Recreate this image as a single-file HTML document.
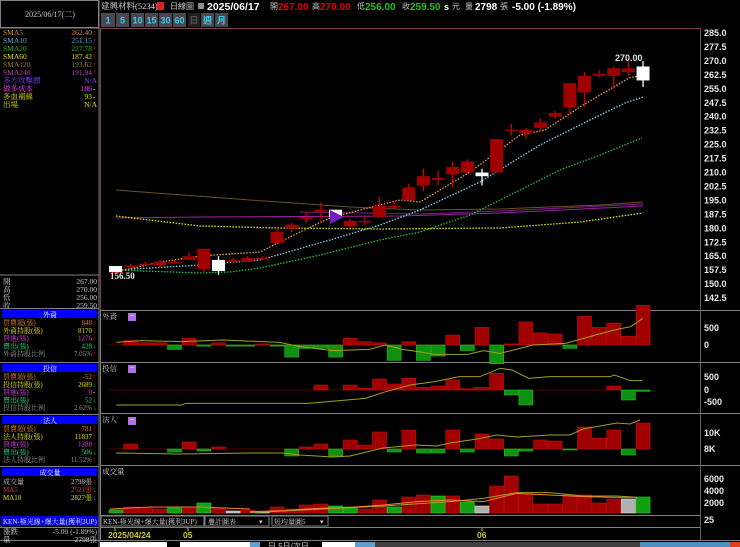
<!DOCTYPE html>
<html><head><meta charset="utf-8">
<style>
*{margin:0;padding:0;box-sizing:border-box}
body{width:740px;height:547px;background:#000;overflow:hidden;font-family:"Liberation Sans","Noto Sans CJK TC",sans-serif;position:relative}
svg{position:absolute;left:0;top:0}
</style></head><body>
<svg id="s" width="740" height="547" xmlns="http://www.w3.org/2000/svg" font-family="Liberation Sans, Noto Sans CJK TC, sans-serif">
<rect width="740" height="547" fill="#000"/>
<rect x="0.5" y="0.5" width="98" height="27" fill="none" stroke="#808080"/>
<text x="50" y="17" fill="#c8c8c8" font-size="8" text-anchor="middle" font-family="Liberation Serif, Noto Serif CJK SC, serif">2025/06/17(二)</text>
<line x1="99" y1="0" x2="99" y2="547" stroke="#808080"/>
<line x1="0" y1="28" x2="99" y2="28" stroke="#808080"/>
<g font-size="7.5" font-family="Liberation Serif, Noto Serif CJK TC, serif">
<text x="3" y="35" fill="#e08a30">SMA5</text><text x="92" y="35" fill="#e08a30" text-anchor="end">262.40</text><text x="93" y="35" fill="#f00">↑</text>
<text x="3" y="43" fill="#5ab0e0">SMA10</text><text x="92" y="43" fill="#5ab0e0" text-anchor="end">251.15</text><text x="93" y="43" fill="#f00">↑</text>
<text x="3" y="51" fill="#20c020">SMA20</text><text x="92" y="51" fill="#20c020" text-anchor="end">227.78</text><text x="93" y="51" fill="#f00">↑</text>
<text x="3" y="59" fill="#e0e000">SMA60</text><text x="92" y="59" fill="#e0e000" text-anchor="end">187.42</text><text x="93" y="59" fill="#f00">↑</text>
<text x="3" y="67" fill="#a07840">SMA120</text><text x="92" y="67" fill="#a07840" text-anchor="end">193.62</text><text x="93" y="67" fill="#f00">↑</text>
<text x="3" y="75" fill="#c040c0">SMA240</text><text x="92" y="75" fill="#c040c0" text-anchor="end">191.94</text><text x="93" y="75" fill="#f00">↑</text>
<text x="3" y="83" fill="#8040ff">多方攻擊圈</text><text x="97" y="83" fill="#8040ff" text-anchor="end">N/A</text>
<text x="3" y="91" fill="#ff40ff">做多成本</text><text x="92" y="91" fill="#ff40ff" text-anchor="end">186</text><text x="93" y="91" fill="#fff">-</text>
<text x="3" y="99" fill="#e0e000">多血補線</text><text x="92" y="99" fill="#e0e000" text-anchor="end">93</text><text x="93" y="99" fill="#fff">-</text>
<text x="3" y="107" fill="#e0e000">出場</text><text x="97" y="107" fill="#e0e000" text-anchor="end">N/A</text>
</g>
<line x1="0" y1="275" x2="99" y2="275" stroke="#808080"/>
<g font-size="7.5" fill="#c8c8c8" font-family="Liberation Serif, Noto Serif CJK TC, serif">
<text x="3" y="284">開</text><text x="97" y="284" text-anchor="end">267.00</text>
<text x="3" y="292">高</text><text x="97" y="292" text-anchor="end">270.00</text>
<text x="3" y="300">低</text><text x="97" y="300" text-anchor="end">256.00</text>
<text x="3" y="308">收</text><text x="97" y="308" text-anchor="end">259.50</text>
</g>
<g id="leftp" font-size="7" font-family="Liberation Serif, Noto Serif CJK TC, serif"></g>
<g font-size="9" font-weight="bold">
<text x="101" y="9" fill="#e0e0e0" font-weight="normal" font-size="8.5" font-family="Liberation Serif, Noto Serif CJK TC, serif">建興材料(5234)</text>
<rect x="157" y="2" width="7" height="8" fill="#e02020"/>
<text x="170" y="9" fill="#c8c8c8" font-weight="normal" font-size="8">日線圖</text>
<rect x="198" y="3" width="6" height="6" fill="#909090"/>
<text x="207" y="10" fill="#fff" font-size="10.5">2025/06/17</text>
<text x="270" y="9" fill="#c8c8c8" font-weight="normal" font-size="8">開</text>
<text x="278" y="10" fill="#e00000" font-size="10">267.00</text>
<text x="312" y="9" fill="#c8c8c8" font-weight="normal" font-size="8">高</text>
<text x="320" y="10" fill="#e00000" font-size="10">270.00</text>
<text x="357" y="9" fill="#c8c8c8" font-weight="normal" font-size="8">低</text>
<text x="365" y="10" fill="#20c020" font-size="10">256.00</text>
<text x="402" y="9" fill="#c8c8c8" font-weight="normal" font-size="8">收</text>
<text x="410" y="10" fill="#20c020" font-size="10">259.50</text>
<text x="444" y="10" fill="#fff" font-size="9">s</text>
<text x="452" y="9" fill="#c8c8c8" font-weight="normal" font-size="8">元</text>
<text x="465" y="9" fill="#c8c8c8" font-weight="normal" font-size="8">量</text>
<text x="475" y="10" fill="#fff" font-size="10">2798</text>
<text x="500" y="9" fill="#c8c8c8" font-weight="normal" font-size="8">張</text>
<text x="512" y="10" fill="#fff" font-size="10">-5.00 (-1.89%)</text>
</g>
<g id="btns" font-size="9" font-weight="bold"></g>
<line x1="100" y1="28.5" x2="700" y2="28.5" stroke="#804050"/>
<line x1="100.5" y1="28" x2="100.5" y2="310" stroke="#804050"/>
<line x1="700.5" y1="28" x2="700.5" y2="540" stroke="#606060"/>
<g stroke="#808080">
<line x1="100" y1="310.5" x2="740" y2="310.5"/><line x1="100" y1="362.5" x2="740" y2="362.5"/>
<line x1="100" y1="413.5" x2="740" y2="413.5"/><line x1="100" y1="465.5" x2="740" y2="465.5"/>
<line x1="100" y1="515.5" x2="700" y2="515.5"/><line x1="100" y1="527.5" x2="700" y2="527.5"/>
<line x1="100.5" y1="310" x2="100.5" y2="540" />
<line x1="0" y1="540.5" x2="740" y2="540.5"/>
</g>
<g id="main"></g>
<g id="axis" font-size="9" font-weight="bold" fill="#e8e8e8"></g>
<g font-size="7.5" fill="#c8c8c8" font-family="Liberation Serif, Noto Serif CJK TC, serif">
<text x="102" y="319">外資</text><text x="102" y="371">投信</text><text x="102" y="422">法人</text><text x="102" y="474">成交量</text>
</g>
<g fill="#b070e0"><rect x="128" y="313" width="8" height="8"/><rect x="128" y="365" width="8" height="8"/><rect x="128" y="417" width="8" height="8"/></g>
<g fill="#e0a0ff"><rect x="130" y="315" width="4" height="1"/><rect x="130" y="367" width="4" height="1"/><rect x="130" y="419" width="4" height="1"/></g>
<g font-size="9" font-weight="bold" fill="#e8e8e8">
<text x="704" y="331">500</text><text x="704" y="348">0</text>
<text x="704" y="380">500</text><text x="704" y="393">0</text><text x="704" y="405">-500</text>
<text x="704" y="436">10K</text><text x="704" y="452">8K</text>
<text x="704" y="482">6000</text><text x="704" y="494">4000</text><text x="704" y="506">2000</text>
<text x="704" y="523">25</text>
</g>
<rect x="101" y="516" width="103" height="10" fill="none" stroke="#808080"/>
<text x="103" y="524" font-size="7" fill="#c8c8c8" font-family="Liberation Serif, Noto Serif CJK TC, serif">KEN-極光線+爆大量(獲利3UP)</text>
<rect x="205" y="516" width="64" height="10" fill="none" stroke="#808080"/>
<text x="208" y="524" font-size="7" fill="#c8c8c8" font-family="Liberation Serif, Noto Serif CJK TC, serif">疊計圖表</text>
<text x="259" y="524" font-size="7" fill="#c8c8c8">▾</text>
<rect x="272" y="516" width="56" height="10" fill="none" stroke="#808080"/>
<text x="274" y="524" font-size="7" fill="#c8c8c8" font-family="Liberation Serif, Noto Serif CJK TC, serif">短均量圖5</text>
<text x="320" y="524" font-size="7" fill="#c8c8c8">▾</text>
<g stroke="#c8c832"><line x1="115" y1="528" x2="115" y2="531"/><line x1="188" y1="528" x2="188" y2="531"/><line x1="482" y1="528" x2="482" y2="531"/></g>
<g font-size="8.5" font-weight="bold" fill="#c8c832"><text x="108" y="538">2025/04/24</text><text x="183" y="538">05</text><text x="477" y="538">06</text></g>
<rect x="100" y="542" width="67" height="5" fill="#fff"/><rect x="180" y="542" width="70" height="5" fill="#fff"/>
<rect x="250" y="542" width="10" height="5" fill="#60a0d0"/>
<text x="268" y="549" font-size="8" fill="#c8c8c8">日 5日/次日</text>
<rect x="322" y="542" width="33" height="5" fill="#fff"/><rect x="355" y="542" width="20" height="5" fill="#60a0d0"/>
<rect x="375" y="542" width="300" height="5" fill="#404040"/>
<rect x="640" y="542" width="100" height="5" fill="#5090c0"/>
<rect x="730" y="542" width="10" height="5" fill="#e04020"/>
<rect x="1" y="516" width="97" height="10" fill="#0000e0"/>
<text x="3" y="524" font-size="7" fill="#e0e0ff" font-family="Liberation Serif, Noto Serif CJK TC, serif">KEN-極光線+爆大量(獲利3UP)</text>
<line x1="0" y1="527.5" x2="99" y2="527.5" stroke="#808080"/>
<g font-size="7.5" fill="#c8c8c8" font-family="Liberation Serif, Noto Serif CJK TC, serif">
<text x="3" y="534">漲跌</text><text x="97" y="534" text-anchor="end">-5.00 (-1.89%)</text>
<text x="3" y="542">量</text><text x="97" y="542" text-anchor="end">2798張</text>
</g>
</svg>
<script>
function add(g,html){document.getElementById(g).insertAdjacentHTML('beforeend',html);}
var b=[["1",101,15],["5",116,14],["10",131,14],["15",145,14],["30",159,14],["60",173,14],["日",188,13],["週",201,14],["月",215,14]];
b.forEach(function(x,i){var dark=i==6;add('btns','<rect x="'+x[1]+'" y="13" width="'+(x[2]-1)+'" height="14" fill="'+(dark?'#202020':'#484850')+'"/><text x="'+(x[1]+x[2]/2-0.5)+'" y="23.5" text-anchor="middle" fill="'+(dark?'#505050':'#40c8e8')+'">'+x[0]+'</text>');});
for(var k=0;k<20;k++){var p=285-7.5*k;var y=33+(285-p)*1.86;add('axis','<text x="704" y="'+(y+3)+'">'+p.toFixed(1)+'</text>');}
function sec(y,title,rows){var s='<rect x="2" y="'+y+'" width="95" height="8" fill="#0000ff"/><text x="50" y="'+(y+7)+'" text-anchor="middle" fill="#fff">'+title+'</text>';
rows.forEach(function(r,i){var yy=y+15+i*7.8;s+='<text x="3" y="'+yy+'" fill="'+r[2]+'">'+r[0]+'</text><text x="92" y="'+yy+'" text-anchor="end" fill="'+r[2]+'">'+r[1]+'</text><text x="93" y="'+yy+'" fill="'+(r[3]=='↑'?'#f00':(r[3]=='↓'?'#0c0':'#fff'))+'">'+r[3]+'</text>';});
s+='<line x1="0" y1="'+(y-1.5)+'" x2="99" y2="'+(y-1.5)+'" stroke="#808080"/>';add('leftp',s);}
sec(310,"外資",[["買賣超(張)","848","#e08030","↑"],["外資持股(張)","8170","#e0e000","↑"],["買進(張)","1276","#e040e0","↑"],["賣出(張)","428","#20e080","↓"],["外資持股比例","7.05%","#909090","↑"]]);
sec(364,"投信",[["買賣超(張)","-52","#e08030","↑"],["投信持股(張)","2689","#e0e000","↓"],["買進(張)","0","#e040e0","-"],["賣出(張)","52","#20e080","↓"],["投信持股比例","2.62%","#909090","↓"]]);
sec(416,"法人",[["買賣超(張)","781","#e08030","↑"],["法人持股(張)","11837","#e0e000","↑"],["買進(張)","1288","#e040e0","↑"],["賣出(張)","506","#20e080","↓"],["法人持股比例","11.52%","#909090","↑"]]);
add('leftp','<line x1="0" y1="466.5" x2="99" y2="466.5" stroke="#808080"/><rect x="2" y="468" width="95" height="8" fill="#0000ff"/><text x="50" y="475" text-anchor="middle" fill="#fff">成交量</text><text x="3" y="484" fill="#c8c8c8">成交量</text><text x="92" y="484" text-anchor="end" fill="#c8c8c8">2798張</text><text x="93" y="484" fill="#f00">↑</text><text x="3" y="492" fill="#e04040">MA5</text><text x="92" y="492" text-anchor="end" fill="#e04040">2521張</text><text x="93" y="492" fill="#0c0">↓</text><text x="3" y="500" fill="#e0e000">MA10</text><text x="92" y="500" text-anchor="end" fill="#e0e000">2827張</text><text x="93" y="500" fill="#0c0">↓</text>');
function X(i){return 116+14.64*i;}
function Y(p){return 33+(285-p)*1.86;}
function pl(pts,col,dash,w){return '<polyline points="'+pts.map(function(p){return p.join(',')}).join(' ')+'" fill="none" stroke="'+col+'" stroke-width="'+(w||1.3)+'"'+(dash?' stroke-dasharray="1.5 1.5"':'')+'/>';}
var m='';
m+=pl([[116,190],[250,200],[350,207],[420,210],[500,209],[600,205],[643,202]],'#6a5028',0,1);
m+=pl([[116,218],[200,217],[400,216],[500,213],[643,206]],'#a020a0',0,1);
m+=pl([[300,212],[420,214],[500,211],[643,204]],'#7a2080',0,1);
m+=pl([[116,216],[200,226],[280,228],[380,229],[500,228],[580,222],[643,213]],'#e8e800',1);
m+=pl([[116,270],[200,273],[230,272],[260,268],[320,255],[380,240],[420,232],[470,215],[520,190],[560,170],[600,155],[642,138]],'#20c040',1);
m+=pl([[116,270],[200,265],[260,260],[330,240],[380,225],[420,210],[480,182],[540,145],[590,120],[625,103],[643,97]],'#80d0f0',1);
m+=pl([[116,272],[160,262],[200,256],[260,252],[300,232],[330,218],[360,210],[400,200],[420,202],[470,172],[520,135],[545,130],[583,105],[629,78],[643,75]],'#f0a040',1);
var C=[[156,158,159,155],[160,160,161,159],[161,161,162,160],[160,162,163,159],[162,162,163,161],[163,165,167,163],[158,169,169,156],[163,157,165,155],[162,163,164,161],[162,164,165,162],[164,164,165,163],[172,178,180,172],[180,182,183,178],[185,186,189,183],[189,190,194,184],[186,190,190,186],[181,184,185,180],[184,184,186,182],[186,192,197,186],[192,192,194,190],[195,202,204,195],[203,208,212,200],[206,207,211,203],[209,213,216,202],[210,216,217,209],[210,208,212,203],[210,228,228,210],[233,233,236,230],[231,233,234,228],[234,237,239,232],[240,242,243,239],[245,258,258,241],[253,262,264,245],[262,263,265,261],[262,266,267,255],[264,266,270,262],[267,259.5,270,256]];
C.forEach(function(c,i){var x=X(i),o=c[0],cl=c[1];var up=cl>=o;
var col=up?'#a00000':'#fff';if(i==15)col='#fff';
var wc=up?'#d00000':'#fff';
m+='<line x1="'+x+'" y1="'+Y(c[2])+'" x2="'+x+'" y2="'+Y(c[3])+'" stroke="'+wc+'" stroke-width="1.3"/>';
var t=Y(Math.max(o,cl)),bo=Y(Math.min(o,cl));var h=Math.max(bo-t,1.5);
m+='<rect x="'+(x-6.5)+'" y="'+t+'" width="13" height="'+h+'" fill="'+col+'"/>';});
m+='<polygon points="330,210 344,217 330,224" fill="#7020c0"/>';
m+='<rect x="109" y="266" width="13" height="6" fill="#fff"/>';
m+='<text x="110" y="279" font-size="9" fill="#e0e0e0" font-family="Liberation Serif,serif" font-weight="bold">156.50</text>';
m+='<text x="615" y="61" font-size="9" fill="#e0e0e0" font-weight="bold">270.00</text>';
var F=[[1,4],[2,2],[3,2],[4,-4],[5,6],[6,-1],[7,2],[8,-1],[9,-1],[10,1],[11,-1],[12,-11],[13,-3],[14,-3],[15,-11],[16,6],[17,3],[18,2],[19,-14],[20,3],[21,-14],[22,-10],[23,9],[24,-5],[25,16],[26,-17],[27,1],[28,21],[29,11],[30,10],[31,-3],[32,26],[33,16],[34,20],[35,8],[36,36]];
function bars(arr,base,sc){arr.forEach(function(a){var x=X(a[0])-7,v=a[1]*sc;m+='<rect x="'+x+'" y="'+(v>0?base-v:base)+'" width="14" height="'+Math.max(Math.abs(v),1)+'" fill="'+(v>0?'#a00000':'#109010')+'" stroke="'+(v>0?'#c01010':'#20c020')+'" stroke-width="0.6"/>';});}
m+='<line x1="108" y1="345" x2="650" y2="345" stroke="#500000"/>';
bars(F,345,1.1);
var fl=[[40,97],[100,92],[200,95],[300,90],[440,97],[490,110],[570,122],[660,118],[700,105],[740,118],[780,125],[820,133],[900,133],[940,122],[980,130],[1020,118],[1060,105],[1140,100],[1200,80],[1260,60],[1300,50],[1330,25]];
m+=pl(fl.map(function(p){return [100+p[0]/2.45,310+p[1]/3]}),'#a0a020',0,1);
m+='<line x1="108" y1="390" x2="650" y2="390" stroke="#500000"/>';
var T=[[14,15],[16,15],[17,5],[18,33],[19,18],[20,35],[21,8],[22,12],[23,30],[24,4],[25,8],[26,50],[27,-15],[28,-45],[34,12],[35,-30],[36,-4]];
bars(T,390,1/3);
var tl=[[40,285],[200,285],[210,280],[510,280],[650,265],[700,245],[760,225],[820,215],[880,200],[930,200],[980,175],[1010,180],[1050,205],[1100,200],[1250,200],[1260,195],[1300,212],[1330,212]];
m+=pl(tl.map(function(p){return [100+p[0]/2.45,310+p[1]/3]}),'#a0a020',0,1);
m+='<line x1="108" y1="449" x2="650" y2="449" stroke="#500000"/>';
var L=[[1,5],[4,-3],[5,7],[6,-2],[7,2],[12,-7],[13,2],[14,5],[15,-7],[16,9],[17,4],[18,17],[19,-3],[20,19],[21,-4],[22,-4],[23,19],[24,-3],[25,15],[26,10],[27,-7],[28,-2],[29,9],[30,8],[31,-1],[32,22],[33,11],[34,19],[35,-6],[36,26]];
bars(L,449,1);
var ll=[[116,453],[180,454],[250,453],[283,453],[300,455],[333,457],[350,456],[383,448],[416,445],[437,446],[450,443],[477,439],[497,435],[517,437],[550,435],[570,435],[583,429],[617,423],[630,424],[640,420]];
m+=pl(ll,'#a0a020',0,1);
var V=[[0,510,'g'],[1,507,'r'],[2,508,'r'],[3,509,'r'],[4,508,'g'],[5,508,'r'],[6,503,'g'],[7,508,'r'],[8,511,'w'],[9,510,'r'],[10,512,'w'],[11,507,'r'],[12,509,'r'],[13,505,'r'],[14,504,'r'],[15,506,'g'],[16,507,'g'],[17,509,'r'],[18,500,'r'],[19,507,'g'],[20,497,'r'],[21,495,'r'],[22,496,'g'],[23,496,'r'],[24,502,'g'],[25,506,'w'],[26,486,'r'],[27,476,'r'],[28,494,'r'],[29,504,'r'],[30,504,'r'],[31,495,'r'],[32,495,'r'],[33,503,'r'],[34,499,'r'],[35,499,'w'],[36,497,'g']];
V.forEach(function(v){var x=X(v[0])-7;var f=v[2]=='r'?'#a00000':v[2]=='g'?'#10a010':'#b0b0b0';var s=v[2]=='r'?'#c01010':v[2]=='g'?'#30d030':'#e0e0e0';m+='<rect x="'+x+'" y="'+v[1]+'" width="14" height="'+(513-v[1])+'" fill="'+f+'" stroke="'+s+'" stroke-width="0.6"/>';});
var vo=[[0,275],[100,272],[200,265],[300,262],[400,255],[500,245],[600,240],[700,245],[800,220],[900,225],[1000,230],[1100,232],[1160,232]];
var vy=[[0,278],[200,268],[400,258],[600,245],[700,235],[800,218],[900,218],[1000,228],[1100,228],[1160,232]];
m+=pl(vy.map(function(p){return [250+p[0]/3,420+p[1]/3]}),'#a0a020',0,1);
m+=pl(vo.map(function(p){return [250+p[0]/3,420+p[1]/3]}),'#f08030',0,1);
m+=pl([[110,509],[150,507],[200,507],[250,509]],'#f08030',0,1);
document.getElementById('main').innerHTML=m;
</script>
</body></html>
